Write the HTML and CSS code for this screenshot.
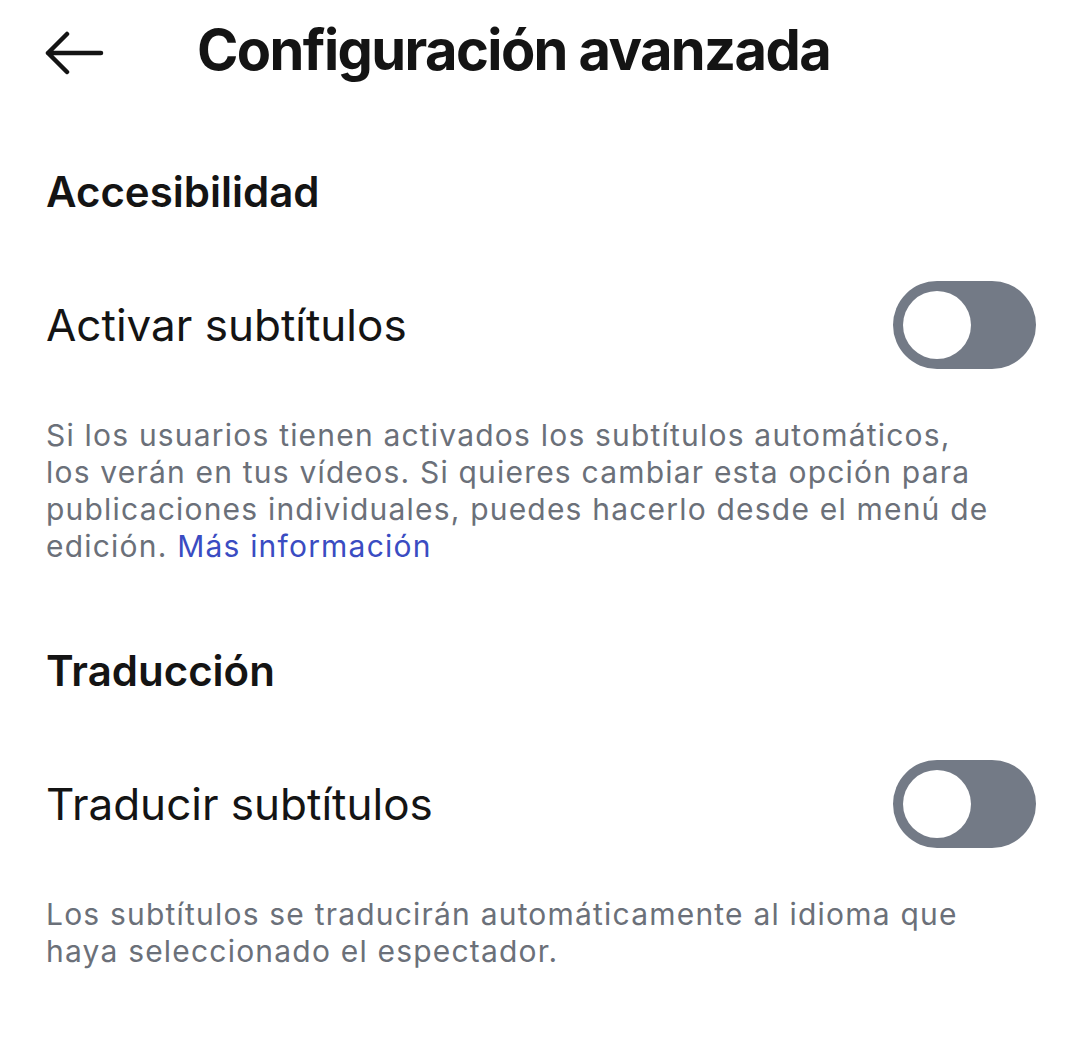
FILE: index.html
```html
<!DOCTYPE html>
<html lang="es">
<head>
    <meta charset="UTF-8">
    <meta name="viewport" content="width=device-width, initial-scale=1.0">
    <title>Configuración avanzada</title>
    <link rel="stylesheet" href="styles.css">
</head>
<body>
    <div class="page">
        <!-- Header -->
        <div class="header">
            <button class="back-btn" type="button" aria-label="Atrás">
                <svg width="60" height="44" viewBox="0 0 60 44">
                    <path d="M57 22 H4 M23 3 L4 22 L23 41" fill="none" stroke="#141414" stroke-width="4.5" stroke-linecap="round" stroke-linejoin="round"/>
                </svg>
            </button>
            <h1>Configuración avanzada</h1>
        </div>

        <!-- Accesibilidad -->
        <div class="section">
            <h2>Accesibilidad</h2>
            <div class="setting-row">
                <span class="setting-label">Activar subtítulos</span>
                <label class="switch">
                    <input type="checkbox">
                    <span class="slider"></span>
                </label>
            </div>
            <p class="setting-help">Si los usuarios tienen activados los subtítulos automáticos, los verán en tus vídeos. Si quieres cambiar esta opción para publicaciones individuales, puedes hacerlo desde el menú de edición. <a href="#">Más información</a></p>
        </div>

        <!-- Traducción -->
        <div class="section">
            <h2>Traducción</h2>
            <div class="setting-row">
                <span class="setting-label">Traducir subtítulos</span>
                <label class="switch">
                    <input type="checkbox">
                    <span class="slider"></span>
                </label>
            </div>
            <p class="setting-help">Los subtítulos se traducirán automáticamente al idioma que haya seleccionado el espectador.</p>
        </div>
    </div>
</body>
</html>
```

FILE: styles.css
```css
body {
    margin: 0;
    background: #ffffff;
    font-family: 'Inter', 'Roboto', sans-serif;
    color: #141414;
}

.page {
    padding: 0 44px 0 46px;
}

.header {
    display: flex;
    align-items: center;
    height: 99px;
}

.back-btn {
    background: none;
    border: none;
    padding: 0;
    margin: 7px 93px 0 -2px;
    width: 60px;
    height: 44px;
    cursor: pointer;
}

.back-btn svg {
    display: block;
}

h1 {
    margin: 0;
    font-size: 56px;
    line-height: 1;
    font-weight: 700;
    letter-spacing: -1.6px;
}

.section {
    margin-top: 63px;
}

.section + .section {
    margin-top: 76px;
}

h2 {
    margin: 0;
    font-size: 42px;
    font-weight: 600;
    line-height: 60px;
}

.setting-row {
    display: flex;
    justify-content: space-between;
    align-items: center;
    margin-top: 59px;
}

.setting-label {
    font-size: 44px;
    font-weight: 400;
}

.switch {
    position: relative;
    display: inline-block;
    width: 143px;
    height: 88px;
}

.switch input {
    opacity: 0;
    width: 0;
    height: 0;
}

.slider {
    position: absolute;
    inset: 0;
    background: #737a86;
    border-radius: 44px;
    cursor: pointer;
}

.slider::before {
    content: "";
    position: absolute;
    left: 10px;
    top: 10px;
    width: 68px;
    height: 68px;
    border-radius: 50%;
    background: #ffffff;
    transition: transform 0.3s ease;
}

.switch input:checked + .slider::before {
    transform: translateX(55px);
}

.setting-help {
    margin: 48px 45px 0 0;
    font-size: 30px;
    line-height: 37px;
    letter-spacing: 1.2px;
    color: #6b7079;
}

.setting-help a {
    color: #3a4cc2;
    text-decoration: none;
}
```
